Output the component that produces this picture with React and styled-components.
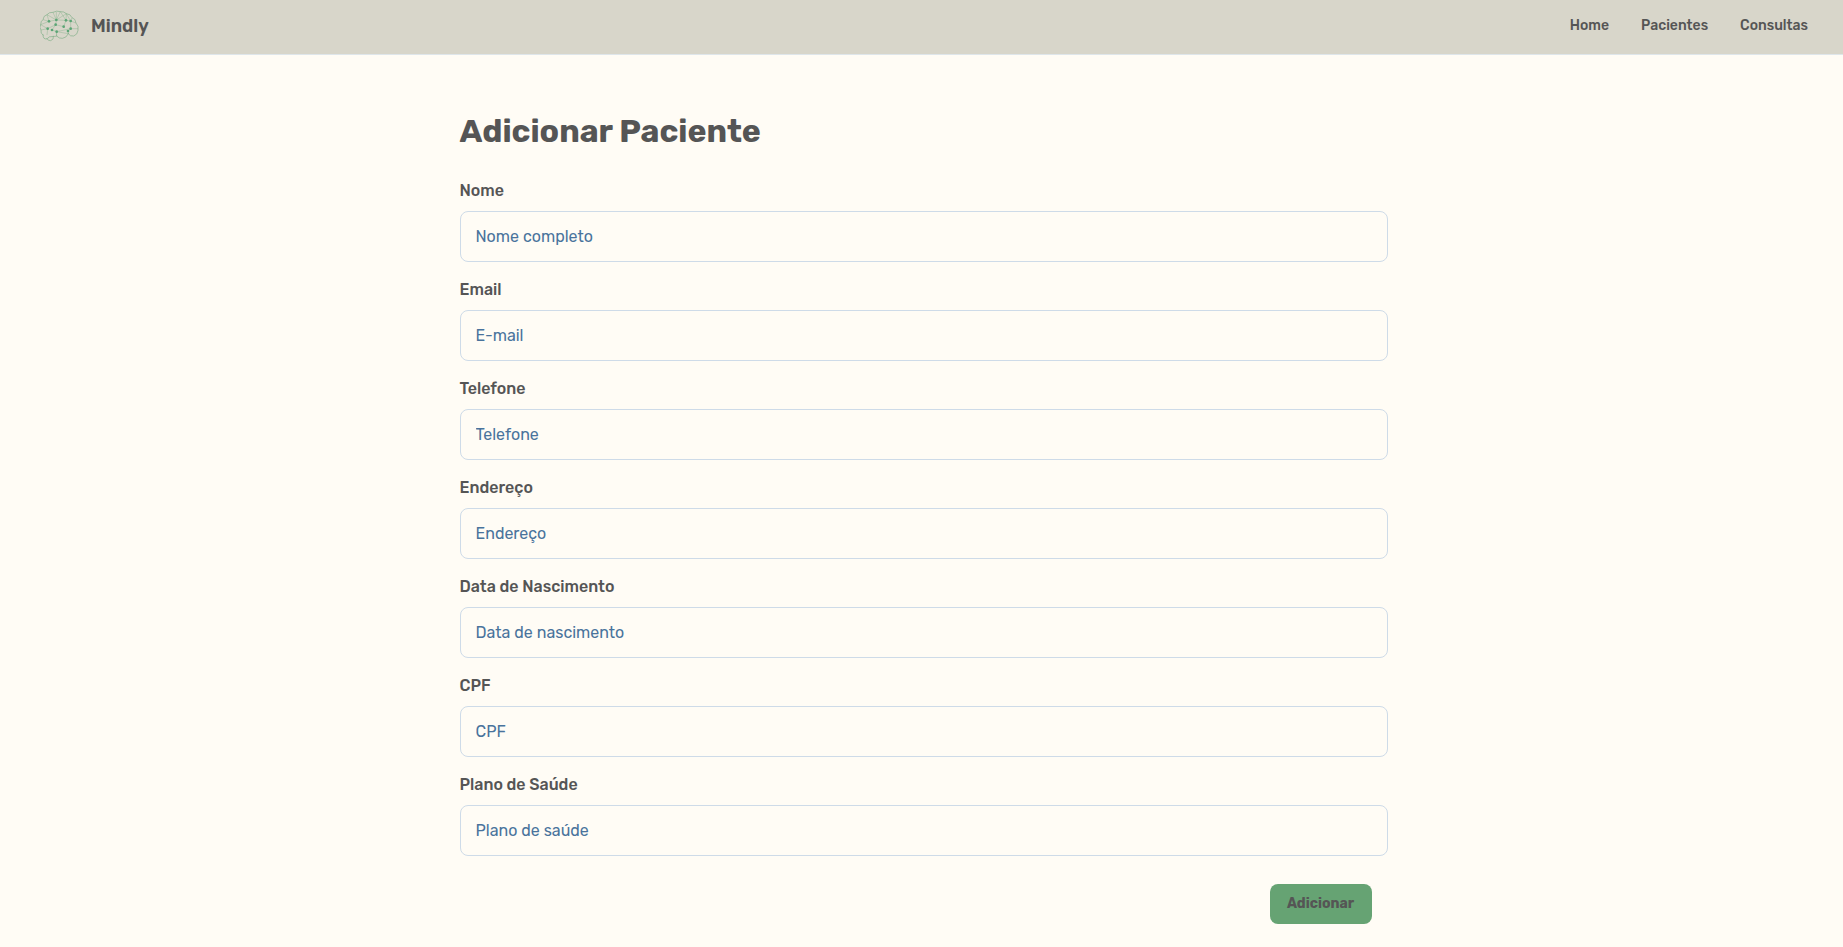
import React from "react";
import styled, { createGlobalStyle } from "styled-components";

const GlobalStyle = createGlobalStyle`
  *, *::before, *::after { box-sizing: border-box; }
  body {
    margin: 0;
    background: #fffcf5;
    color: #555555;
    font-family: Rubik, Inter, "Liberation Sans", sans-serif;
    font-size: 16px;
    line-height: 24px;
  }
`;

const Header = styled.header`
  display: flex;
  align-items: center;
  justify-content: space-between;
  padding: 10px 35px 12px 40px;
  background: #d8d6ca;
  border-bottom: 1px solid #dfe6ea;
`;

const Brand = styled.a`
  display: flex;
  align-items: center;
  gap: 11px;
  color: inherit;
  font-size: 18px;
  font-weight: 600;
  text-decoration: none;
`;

const Nav = styled.nav`
  display: flex;
  gap: 32px;
`;

const NavLink = styled.a`
  color: inherit;
  font-size: 14px;
  font-weight: 500;
  text-decoration: none;
`;

const Main = styled.main`
  display: flex;
  justify-content: center;
  padding: 56px 16px 23px 20px;
`;

const Form = styled.form`
  display: flex;
  flex-direction: column;
  gap: 28px;
  width: 100%;
  max-width: 928px;
`;

const Title = styled.h1`
  margin: 0;
  font-size: 32px;
  font-weight: 700;
  line-height: 40px;
`;

const Fields = styled.div`
  display: flex;
  flex-direction: column;
  gap: 16px;
`;

const Field = styled.div`
  display: flex;
  flex-direction: column;
  gap: 8px;
`;

const Label = styled.label`
  font-weight: 500;
`;

const Input = styled.input`
  width: 100%;
  height: 51px;
  padding: 0 15px;
  border: 1px solid #cedbe8;
  border-radius: 8px;
  background: transparent;
  color: #555555;
  font: inherit;

  &::placeholder {
    color: #49739c;
    opacity: 1;
  }
`;

const Actions = styled.div`
  display: flex;
  justify-content: flex-end;
  padding: 0 16px;
`;

const Button = styled.button`
  min-width: 102px;
  height: 40px;
  padding: 0 16px;
  border: 0;
  border-radius: 8px;
  background: #66a373;
  color: #555555;
  font: inherit;
  font-size: 14px;
  font-weight: 700;
  cursor: pointer;
`;

const NODES = [
  [57, 64], [79, 60], [108, 61], [122, 63], [77, 74], [101, 80],
  [53, 86], [66, 90], [80, 95], [122, 86], [114, 93],
];

function BrainLogo() {
  return (
    <svg width="40" height="32" viewBox="30 30 120 96" fill="none" aria-hidden="true">
      <g stroke="#66a373" strokeOpacity="0.55" strokeWidth="2.8" strokeLinejoin="round" strokeLinecap="round">
        <path d="M39 105 Q31 101 33 90 Q27 82 32 74 Q32 63 39 59 Q40 47 51 44 Q57 36 69 37 Q80 31 91 35 Q102 34 109 41 Q122 42 126 53 Q137 56 138 69 Q147 78 144 91 Q143 104 131 108 Q120 110 115 101 Q109 114 97 115 Q87 116 80 108 Q75 110 70 109 Q72 119 62 122 Q53 122 51 116 Q39 120 39 105Z" />
        <path d="M51 116 Q56 108 70 109 M80 108 Q79 101 80 95 M115 101 Q114 96 114 93" />
      </g>
      <g stroke="#66a373" strokeOpacity="0.45" strokeWidth="2">
        <path d="M39 59 L57 64 L51 44 L79 60 L69 37 M91 35 L79 60 L79 36 M79 60 L108 61 L91 35 M109 41 L108 61 L122 63 L109 41 M122 63 L126 53 M79 60 L109 41 M57 64 L79 60 L77 74 M32 74 L57 64 M32 74 L53 86 M77 74 L66 90 L80 95 M77 74 L101 80 L108 61 M122 63 L138 69 M33 90 L53 86 M53 86 L51 105 M53 86 L77 74 M80 95 L122 86 L114 93 M80 95 L115 101 M122 86 L144 86 M122 63 L122 86" />
      </g>
      <g fill="#5aa575">
        {NODES.map(([x, y]) => <circle key={x + "-" + y} cx={x} cy={y} r="4" />)}
      </g>
    </svg>
  );
}

const FIELDS = [
  { id: "nome", label: "Nome", placeholder: "Nome completo" },
  { id: "email", label: "Email", placeholder: "E-mail", type: "email" },
  { id: "telefone", label: "Telefone", placeholder: "Telefone", type: "tel" },
  { id: "endereco", label: "Endereço", placeholder: "Endereço" },
  { id: "nascimento", label: "Data de Nascimento", placeholder: "Data de nascimento" },
  { id: "cpf", label: "CPF", placeholder: "CPF" },
  { id: "plano", label: "Plano de Saúde", placeholder: "Plano de saúde" },
];

export default function App() {
  return (
    <>
      <GlobalStyle />
      <Header>
        <Brand href="#">
          <BrainLogo />
          Mindly
        </Brand>
        <Nav>
          <NavLink href="#home">Home</NavLink>
          <NavLink href="#pacientes">Pacientes</NavLink>
          <NavLink href="#consultas">Consultas</NavLink>
        </Nav>
      </Header>
      <Main>
        <Form onSubmit={(event) => event.preventDefault()}>
          <Title>Adicionar Paciente</Title>
          <Fields>
            {FIELDS.map(({ id, label, placeholder, type = "text" }) => (
              <Field key={id}>
                <Label htmlFor={id}>{label}</Label>
                <Input id={id} name={id} type={type} placeholder={placeholder} />
              </Field>
            ))}
          </Fields>
          <Actions>
            <Button type="submit">Adicionar</Button>
          </Actions>
        </Form>
      </Main>
    </>
  );
}
